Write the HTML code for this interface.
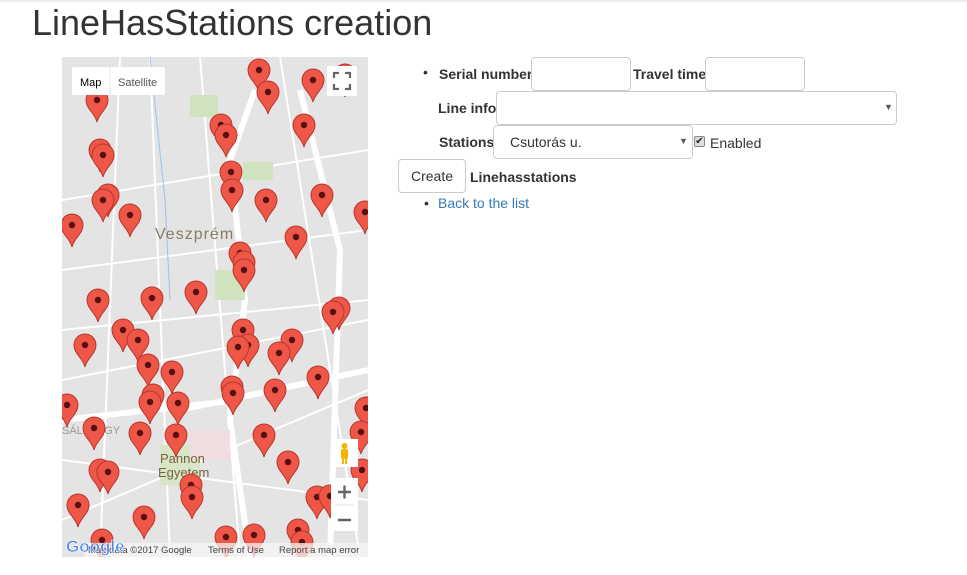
<!DOCTYPE html>
<html><head><meta charset="utf-8"><style>
body{margin:0;width:967px;height:575px;overflow:hidden;background:#fff;font-family:"Liberation Sans",Arial,sans-serif;font-size:14px;color:#333;position:relative}
.a{position:absolute}
h1{position:absolute;left:32px;top:2px;margin:0;font-weight:400;font-size:36px;color:#333}
.in{position:absolute;border:1px solid #ccc;border-radius:4px;background:#fff;box-sizing:border-box}
b{font-weight:bold}
.arr{position:absolute;font-size:9px;color:#555}
</style></head><body>
<div class="a" style="left:0;top:0;width:967px;height:2px;background:#eee"></div>
<h1>LineHasStations creation</h1>
<svg class="a" style="left:62px;top:57px" width="306" height="500" viewBox="62 57 306 500">
<defs>
<g id="p"><path d="M0,22 C-2,13 -11,9 -11,0 A11,11 0 1 1 11,0 C11,9 2,13 0,22Z" fill="#ee5648" stroke="#b8372b" stroke-width="1"/><circle r="3.2" fill="#561010"/></g>
</defs>
<rect x="62" y="57" width="306" height="500" fill="#e4e4e4"/>
<g stroke="#fff" fill="none">
<path d="M62,200 L368,150 M62,270 L368,230 M62,380 L368,320 M62,520 L250,440 L368,390 M120,57 L100,557 M200,57 L240,557 M280,57 L360,557 M62,460 L368,500 M62,330 L368,300 M150,57 L170,557" stroke-width="2"/>
<path d="M255,90 L230,160 L245,300 L230,420 L250,557 M300,90 L340,250 L330,557 M180,410 L368,370 M62,420 L240,400" stroke-width="6"/>
</g>
<path d="M150,57 L165,200 L170,300" stroke="#9cc0f0" fill="none" stroke-width="1"/>
<rect x="190" y="95" width="28" height="22" fill="#cfe4be"/>
<rect x="243" y="162" width="30" height="18" fill="#cfe4be"/>
<rect x="215" y="270" width="30" height="30" fill="#cfe4be"/>
<rect x="160" y="445" width="40" height="40" fill="#d6e6c6"/>
<rect x="190" y="430" width="40" height="30" fill="#f0dde0"/>
<text x="155" y="239" font-family="Liberation Sans" font-size="16" fill="#8a7b62" letter-spacing="1">Veszprém</text>
<text x="160" y="463" font-family="Liberation Sans" font-size="13" fill="#7a6142">Pannon</text>
<text x="158" y="477" font-family="Liberation Sans" font-size="13" fill="#7a6142">Egyetem</text>
<text x="62" y="434" font-family="Liberation Sans" font-size="11" fill="#999">SÁLLHEGY</text>
<g>
<use href="#p" x="259" y="70"/><use href="#p" x="268" y="92"/><use href="#p" x="313" y="80"/><use href="#p" x="345" y="75"/><use href="#p" x="97" y="100"/><use href="#p" x="221" y="125"/><use href="#p" x="226" y="135"/><use href="#p" x="304" y="125"/><use href="#p" x="100" y="150"/><use href="#p" x="103" y="155"/><use href="#p" x="231" y="172"/><use href="#p" x="232" y="190"/><use href="#p" x="108" y="195"/><use href="#p" x="103" y="200"/><use href="#p" x="130" y="215"/><use href="#p" x="266" y="200"/><use href="#p" x="322" y="195"/><use href="#p" x="72" y="225"/><use href="#p" x="365" y="212"/><use href="#p" x="240" y="253"/><use href="#p" x="244" y="262"/><use href="#p" x="244" y="270"/><use href="#p" x="296" y="237"/><use href="#p" x="98" y="300"/><use href="#p" x="152" y="298"/><use href="#p" x="196" y="292"/><use href="#p" x="339" y="308"/><use href="#p" x="333" y="312"/><use href="#p" x="123" y="330"/><use href="#p" x="138" y="340"/><use href="#p" x="243" y="330"/><use href="#p" x="248" y="345"/><use href="#p" x="238" y="347"/><use href="#p" x="292" y="340"/><use href="#p" x="85" y="345"/><use href="#p" x="279" y="353"/><use href="#p" x="148" y="365"/><use href="#p" x="172" y="372"/><use href="#p" x="232" y="387"/><use href="#p" x="233" y="393"/><use href="#p" x="275" y="390"/><use href="#p" x="318" y="377"/><use href="#p" x="153" y="395"/><use href="#p" x="150" y="402"/><use href="#p" x="178" y="403"/><use href="#p" x="67" y="405"/><use href="#p" x="94" y="428"/><use href="#p" x="140" y="433"/><use href="#p" x="176" y="435"/><use href="#p" x="264" y="435"/><use href="#p" x="366" y="408"/><use href="#p" x="361" y="432"/><use href="#p" x="362" y="470"/><use href="#p" x="100" y="470"/><use href="#p" x="108" y="472"/><use href="#p" x="288" y="462"/><use href="#p" x="191" y="485"/><use href="#p" x="192" y="497"/><use href="#p" x="78" y="505"/><use href="#p" x="317" y="497"/><use href="#p" x="330" y="496"/><use href="#p" x="144" y="517"/><use href="#p" x="102" y="540"/><use href="#p" x="226" y="537"/><use href="#p" x="254" y="535"/><use href="#p" x="298" y="530"/><use href="#p" x="302" y="542"/>
</g>
<rect x="72" y="67" width="93" height="28" fill="#fff" rx="2"/>
<line x1="110" y1="67" x2="110" y2="95" stroke="#e6e6e6"/>
<text x="80" y="86" font-family="Liberation Sans" font-size="11" fill="#000">Map</text>
<text x="118" y="86" font-family="Liberation Sans" font-size="11" fill="#555">Satellite</text>
<rect x="327" y="66" width="30" height="30" fill="#fff"/>
<path d="M334,78 V73 H339 M345,73 H350 V78 M350,84 V89 H345 M339,89 H334 V84" stroke="#666" stroke-width="2.2" fill="none"/>
<rect x="331" y="439" width="27" height="28" fill="#fff"/>
<circle cx="344.5" cy="446" r="3" fill="#f5b400"/><rect x="341" y="449" width="7" height="10" rx="2" fill="#f5b400"/><rect x="342" y="458" width="2" height="6" fill="#f5b400"/><rect x="345" y="458" width="2" height="6" fill="#f5b400"/>
<rect x="331" y="478" width="27" height="53" fill="#fff"/>
<line x1="335" y1="505" x2="354" y2="505" stroke="#e6e6e6"/>
<path d="M338,492 H351 M344.5,485.5 V498.5 M338,520 H351" stroke="#666" stroke-width="2.4"/>
<rect x="85" y="543" width="283" height="14" fill="rgba(245,245,245,0.75)"/>
<text x="88" y="553" font-family="Liberation Sans" font-size="9.5" fill="#444">Map data ©2017 Google</text>
<text x="208" y="553" font-family="Liberation Sans" font-size="9.5" fill="#444">Terms of Use</text>
<text x="279" y="553" font-family="Liberation Sans" font-size="9.5" fill="#444">Report a map error</text>
<text x="66" y="552" font-family="Liberation Sans" font-size="17" font-weight="bold" fill="#4a87e8" stroke="#fff" stroke-width="0.6">Google</text>
</svg>

<div class="a" style="left:423px;top:64px;font-size:14px">•</div>
<b class="a" style="left:439px;top:66px">Serial number</b>
<div class="in" style="left:531px;top:57px;width:100px;height:34px"></div>
<b class="a" style="left:633px;top:66px">Travel time</b>
<div class="in" style="left:705px;top:57px;width:100px;height:34px"></div>
<b class="a" style="left:438px;top:100px">Line info</b>
<div class="in" style="left:496px;top:91px;width:401px;height:34px"></div>
<div class="arr" style="left:884px;top:102px">▼</div>
<b class="a" style="left:439px;top:134px">Stations</b>
<div class="in" style="left:493px;top:125px;width:200px;height:34px"></div>
<div class="a" style="left:510px;top:134px">Csutorás u.</div>
<div class="arr" style="left:679px;top:136px">▼</div>
<div class="a" style="left:694px;top:136px;width:11px;height:11px;border:1px solid #888;border-radius:2px;background:#ddd;box-sizing:border-box;font-size:10px;line-height:9px;text-align:center;color:#222">✔</div>
<div class="a" style="left:710px;top:135px">Enabled</div>
<div class="in" style="left:398px;top:159px;width:68px;height:34px;text-align:center;line-height:32px">Create</div>
<b class="a" style="left:470px;top:169px">Linehasstations</b>
<div class="a" style="left:424px;top:195px">•</div>
<div class="a" style="left:438px;top:195px;color:#337ab7">Back to the list</div>
</body></html>
